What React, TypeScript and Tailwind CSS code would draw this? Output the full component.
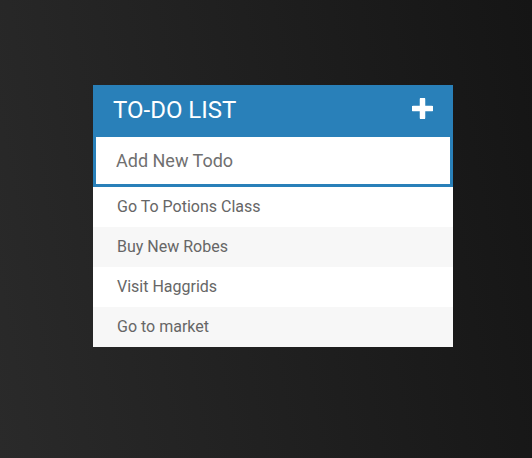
import { useState } from "react";

const initialTodos = ["Go To Potions Class", "Buy New Robes", "Visit Haggrids", "Go to market"];

function PlusIcon() {
  return (
    <svg width="21" height="21" viewBox="0 0 21 21" aria-hidden="true">
      <path d="M10.5 1.5v18M1.5 10.5h18" stroke="white" strokeWidth="5.5" strokeLinecap="round" strokeLinejoin="round" />
    </svg>
  );
}

export default function App() {
  const [todos, setTodos] = useState<string[]>(initialTodos);
  const [text, setText] = useState("");

  return (
    <div className="min-h-screen bg-linear-[80deg] from-[#2a2a2a] to-[#151515] pt-[85px] pl-[93px] font-['Roboto','Liberation_Sans',sans-serif]">
      <div className="w-[360px] bg-white">
        <h1 className="flex h-[49px] items-center justify-between bg-[#2980b9] pl-5 pr-[20px] text-[24px] leading-none font-normal uppercase text-white">
          <span className="pt-px">To-do list</span>
          <span className="-mt-[3px]">
            <PlusIcon />
          </span>
        </h1>
        <input
          autoFocus
          className="block h-[53px] w-full border-[3px] border-[#2980b9] bg-white pl-5 pr-3 text-[18px] text-[#666] caret-[#2980b9] outline-none placeholder:text-[#707070]"
          placeholder="Add New Todo"
          value={text}
          onChange={(event) => setText(event.target.value)}
          onKeyDown={(event) => {
            if (event.key === "Enter" && text.trim()) {
              setTodos([...todos, text.trim()]);
              setText("");
            }
          }}
        />
        <ul>
          {todos.map((todo, index) => (
            <li key={todo + index} className={`h-10 pl-6 text-[16px] leading-10 text-[#666] ${index % 2 === 1 ? "bg-[#f7f7f7]" : "bg-white"}`}>
              {todo}
            </li>
          ))}
        </ul>
      </div>
    </div>
  );
}
